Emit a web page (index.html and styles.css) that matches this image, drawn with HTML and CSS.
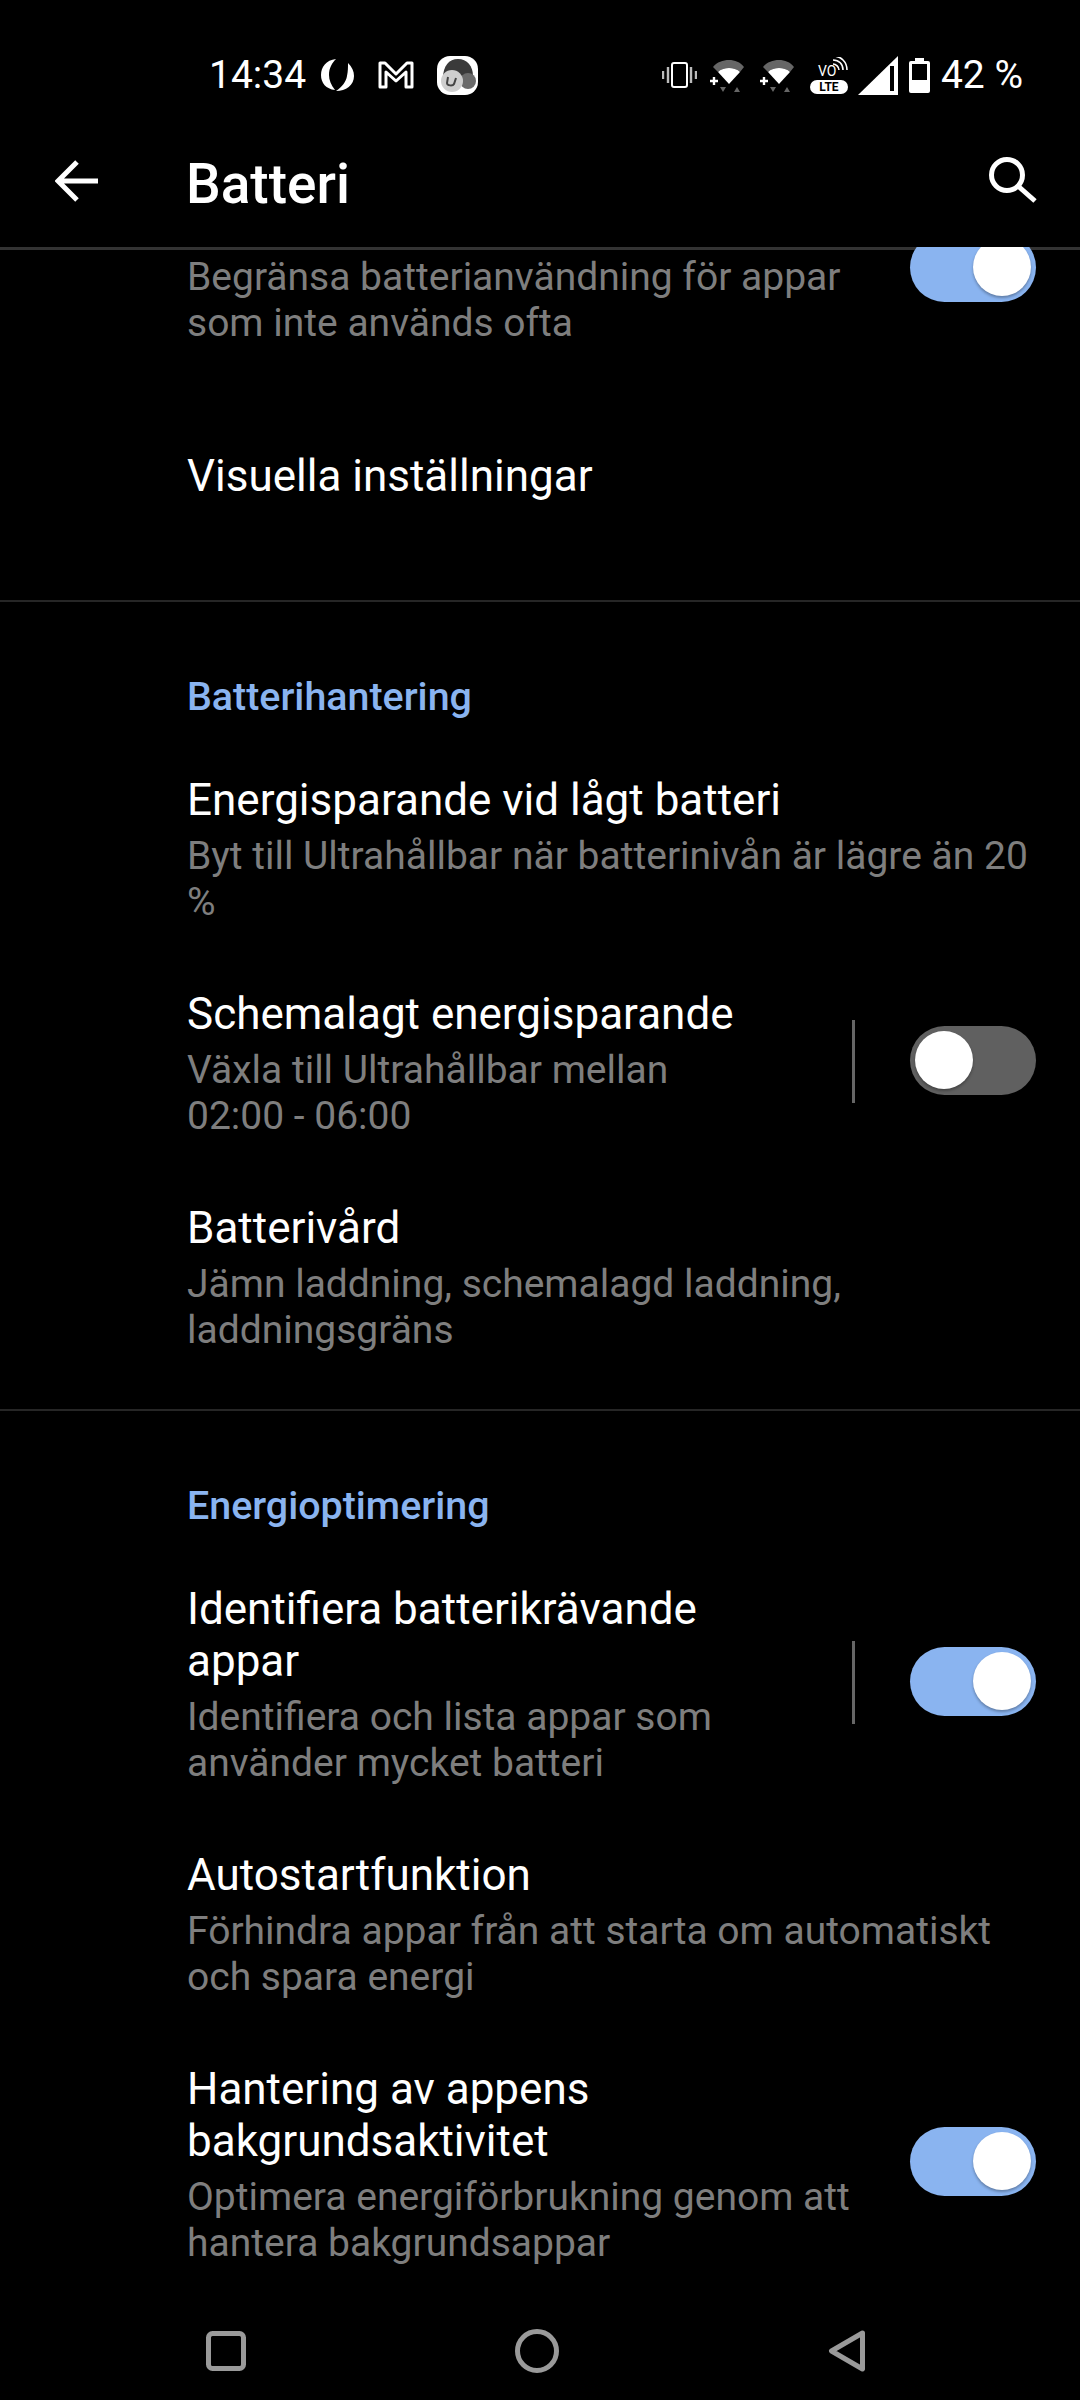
FILE: index.html

```html
<!DOCTYPE html>
<html lang="sv">
<head>
  <meta charset="UTF-8">
  <meta name="viewport" content="width=device-width, initial-scale=1.0">
  <title>Batteri</title>
  <link rel="stylesheet" href="styles.css">
</head>
<body>
  <div class="screen">
    <div class="statusbar">
      <div class="status-left">
        <span class="clock">14:34</span>
        <svg class="ic-sync" viewBox="0 0 35 35"><path d="M16 1C6 2 1 9 1 17c0 8 5 14 14 15-4-5-6-10-6-15 0-7 3-12 7-16z" fill="#fff"/><path d="M28 5c4 4 6 8 6 13 0 9-8 15-18 15 6-4 10-9 11-15 1-5 1-9 1-13z" fill="#fff"/></svg>
        <svg class="ic-m" viewBox="0 0 38 30"><path d="M3 27V3h5l11 11L30 3h5v24h-6V12l-10 9-10-9v15z" fill="none" stroke="#fff" stroke-width="3" stroke-linejoin="round"/></svg>
        <svg class="ic-app" viewBox="0 0 41 39"><rect width="41" height="39" rx="13" fill="#fff"/><path d="M6 22C6 10 12 3 21 3s15 7 15 17v3H6z" fill="#3a3a3a"/><circle cx="31" cy="25" r="8" fill="#6a6a6a"/><circle cx="15" cy="25" r="11" fill="#cfcfcf"/><path d="M11 21l-1 6c0 3 6 3 7 1l2-6" fill="none" stroke="#444" stroke-width="2"/></svg>
      </div>
      <div class="status-right">
        <svg class="ic-vib" viewBox="0 0 35 26"><rect x="10" y="1" width="15" height="24" rx="2" fill="none" stroke="#fff" stroke-width="2"/><path d="M6 5v16M1 9v8M29 5v16M34 9v8" stroke="#bbb" stroke-width="2.4"/></svg>
        <svg class="ic-wifi" viewBox="0 0 35 35"><path d="M3 9C7 4 13 2 19 2s11 2 15 7l-4 5c-3-3-7-4-11-4s-8 1-11 4z" fill="#666"/><path d="M8 14c3-3 7-4 11-4s8 1 11 4L19 26z" fill="#fff"/><path d="M0 23h8M4 19v8" stroke="#fff" stroke-width="2.4"/><path d="M10 29h6l-3 5zM24 34l3-5 3 5z" fill="#666"/></svg>
        <svg class="ic-wifi" viewBox="0 0 35 35"><path d="M3 9C7 4 13 2 19 2s11 2 15 7l-4 5c-3-3-7-4-11-4s-8 1-11 4z" fill="#666"/><path d="M8 14c3-3 7-4 11-4s8 1 11 4L19 26z" fill="#fff"/><path d="M0 23h8M4 19v8" stroke="#fff" stroke-width="2.4"/><path d="M10 29h6l-3 5zM24 34l3-5 3 5z" fill="#666"/></svg>
        <div class="ic-volte">
          <svg class="volte-waves" viewBox="0 0 38 22"><path d="M23 7c3 0 6 3 6 6M23 3c6 0 10 4 10 10M23-1c8 0 14 6 14 14" fill="none" stroke="#fff" stroke-width="1.6"/></svg>
          <span class="volte-vo">VO</span>
          <span class="volte-lte">LTE</span>
        </div>
        <svg class="ic-signal" viewBox="0 0 40 39"><path d="M40 0v39H0z" fill="#fff"/><rect x="32" y="10" width="4" height="25" fill="#000"/></svg>
        <svg class="ic-batt" viewBox="0 0 21 35"><path d="M6 0h9v3h4a2 2 0 0 1 2 2v28a2 2 0 0 1-2 2H2a2 2 0 0 1-2-2V5a2 2 0 0 1 2-2h4z" fill="#fff"/><rect x="3" y="6" width="15" height="16" fill="#000"/></svg>
        <span class="batt-pct">42 %</span>
      </div>
    </div>

    <div class="toolbar">
      <svg class="ic-back" viewBox="0 0 44 44"><path d="M43 22H4M22 3L3 22l19 19" fill="none" stroke="#fff" stroke-width="5"/></svg>
      <h1 class="page-title">Batteri</h1>
      <svg class="ic-search" viewBox="0 0 48 46"><circle cx="18" cy="18" r="15.500" fill="none" stroke="#fff" stroke-width="5"/><path d="M29 29l17 15" stroke="#fff" stroke-width="5"/></svg>
    </div>

    <div class="list">
      <div class="row row-clipped">
        <div class="row-sub">Begränsa batterianvändning för appar som inte används ofta</div>
        <div class="switch on"></div>
      </div>
      <div class="row row-single">
        <div class="row-title">Visuella inställningar</div>
      </div>

      <div class="section">
        <div class="section-title">Batterihantering</div>
        <div class="row">
          <div class="row-text">
            <div class="row-title">Energisparande vid lågt batteri</div>
            <div class="row-sub">Byt till Ultrahållbar när batterinivån är lägre än 20 %</div>
          </div>
        </div>
        <div class="row has-switch">
          <div class="row-text">
            <div class="row-title">Schemalagt energisparande</div>
            <div class="row-sub">Växla till Ultrahållbar mellan 02:00 - 06:00</div>
          </div>
          <div class="vline"></div>
          <div class="switch"></div>
        </div>
        <div class="row">
          <div class="row-text narrow">
            <div class="row-title">Batterivård</div>
            <div class="row-sub">Jämn laddning, schemalagd laddning, laddningsgräns</div>
          </div>
        </div>
      </div>

      <div class="section">
        <div class="section-title">Energioptimering</div>
        <div class="row has-switch">
          <div class="row-text">
            <div class="row-title">Identifiera batterikrävande appar</div>
            <div class="row-sub">Identifiera och lista appar som använder mycket batteri</div>
          </div>
          <div class="vline"></div>
          <div class="switch on"></div>
        </div>
        <div class="row">
          <div class="row-text">
            <div class="row-title">Autostartfunktion</div>
            <div class="row-sub">Förhindra appar från att starta om automatiskt och spara energi</div>
          </div>
        </div>
        <div class="row has-switch">
          <div class="row-text wide">
            <div class="row-title">Hantering av appens bakgrundsaktivitet</div>
            <div class="row-sub">Optimera energiförbrukning genom att hantera bakgrundsappar</div>
          </div>
          <div class="switch on"></div>
        </div>
      </div>
    </div>

    <div class="navbar">
      <svg class="nav-recent" viewBox="0 0 40 40"><rect x="2.500" y="2.500" width="35" height="35" rx="4" fill="none" stroke="#9a9a9a" stroke-width="5"/></svg>
      <svg class="nav-home" viewBox="0 0 44 44"><circle cx="22" cy="22" r="19.500" fill="none" stroke="#9a9a9a" stroke-width="5"/></svg>
      <svg class="nav-back" viewBox="0 0 38 42"><path d="M34.500 3L3.500 21l31 18z" fill="none" stroke="#9a9a9a" stroke-width="5" stroke-linejoin="round"/></svg>
    </div>
  </div>
</body>
</html>
```

FILE: styles.css

```css
* {
  box-sizing: border-box;
}
html, body {
  margin: 0;
  padding: 0;
  background: #000;
}
body {
  font-family: Roboto, "Noto Sans", sans-serif;
  color: #fff;
}
.screen {
  width: 1080px;
  height: 2400px;
  display: flex;
  flex-direction: column;
  overflow: hidden;
  background: #000;
}

/* status bar */
.statusbar {
  height: 150px;
  padding: 54px 57px 0 209px;
  display: flex;
  justify-content: space-between;
  align-items: flex-start;
  flex-shrink: 0;
}
.status-left, .status-right {
  display: flex;
  align-items: center;
  height: 42px;
}
.clock, .batt-pct {
  font-size: 39px;
  line-height: 42px;
}
.ic-sync { width: 35px; height: 35px; margin-left: 14px; }
.ic-m { width: 38px; height: 30px; margin-left: 22px; }
.ic-app { width: 41px; height: 39px; margin-left: 22px; }
.ic-vib { width: 35px; height: 26px; }
.ic-wifi { width: 35px; height: 35px; margin-left: 13px; }
.ic-wifi + .ic-wifi { margin-left: 15px; }
.ic-volte {
  position: relative;
  width: 38px;
  height: 37px;
  margin-left: 15px;
}
.volte-waves {
  position: absolute;
  left: 0;
  top: 0;
  width: 38px;
  height: 22px;
}
.volte-vo {
  position: absolute;
  left: 8px;
  top: 7px;
  font-size: 14px;
  line-height: 14px;
}
.volte-lte {
  position: absolute;
  left: 0;
  bottom: 0;
  width: 38px;
  height: 14px;
  border-radius: 7px;
  background: #fff;
  color: #000;
  font-size: 12px;
  font-weight: 700;
  line-height: 14px;
  text-align: center;
}
.ic-signal { width: 40px; height: 39px; margin-left: 10px; }
.ic-batt { width: 21px; height: 35px; margin-left: 11px; }
.batt-pct { margin-left: 11px; }

/* toolbar */
.toolbar {
  height: 100px;
  border-bottom: 3px solid #333;
  padding: 0 43px 0 55px;
  display: flex;
  align-items: flex-start;
  flex-shrink: 0;
}
.ic-back { width: 44px; height: 44px; margin-top: 9px; }
.page-title {
  margin: 2px 0 0 87px;
  font-size: 55px;
  font-weight: 500;
  line-height: 64px;
  flex: 1;
}
.ic-search { width: 48px; height: 46px; margin-top: 7px; }

/* settings list */
.list {
  flex: 1;
  min-height: 0;
  overflow: hidden;
  margin-top: -3px;
  position: relative;
}
.row {
  display: flex;
  align-items: center;
  padding: 32px 44px 31px 187px;
}
.row-text {
  flex: 1;
  min-width: 0;
}
.row-text.narrow {
  max-width: 720px;
  flex: none;
}
.has-switch .row-text {
  max-width: 560px;
  flex: none;
  margin-right: auto;
}
.has-switch .row-text.wide {
  max-width: 680px;
}
/* top row is scrolled under the toolbar, its switch gets cut by .list */
.row-clipped {
  align-items: flex-start;
  justify-content: space-between;
  padding-top: 7px;
}
.row-clipped .row-sub {
  max-width: 680px;
  margin-top: 0;
}
.row-clipped .switch {
  margin-top: -21px;
}
.row-single {
  padding-top: 73px;
  padding-bottom: 73px;
}
.row-title {
  font-size: 44px;
  line-height: 52px;
}
.row-sub {
  font-size: 39px;
  line-height: 46px;
  color: #7e7e7e;
  margin-top: 7px;
}
.section {
  border-top: 2px solid #262626;
  margin-top: 25px;
  padding-top: 72px;
}
.section-title {
  font-size: 39.4px;
  font-weight: 500;
  line-height: 46px;
  color: #8ab4f0;
  padding-left: 187px;
  margin-bottom: 22px;
}

/* switches */
.vline {
  width: 3px;
  height: 83px;
  background: #666;
  margin: -4px 55px 0 0;
  flex-shrink: 0;
}
.switch {
  width: 126px;
  height: 69px;
  border-radius: 35px;
  background: #606060;
  padding: 5px;
  flex-shrink: 0;
  display: flex;
  margin-top: -6px;
}
.switch::before {
  content: "";
  width: 58px;
  height: 58px;
  border-radius: 50%;
  background: #fff;
  box-shadow: 0 2px 3px rgba(0, 0, 0, 0.3);
}
.switch.on {
  background: #8ab4f0;
  justify-content: flex-end;
}

/* nav bar */
.navbar {
  height: 120px;
  display: flex;
  align-items: center;
  justify-content: space-between;
  padding: 22px 214px 0 206px;
  flex-shrink: 0;
  background: #000;
}
.nav-recent { width: 40px; height: 40px; }
.nav-home { width: 44px; height: 44px; }
.nav-back { width: 38px; height: 42px; }
```
